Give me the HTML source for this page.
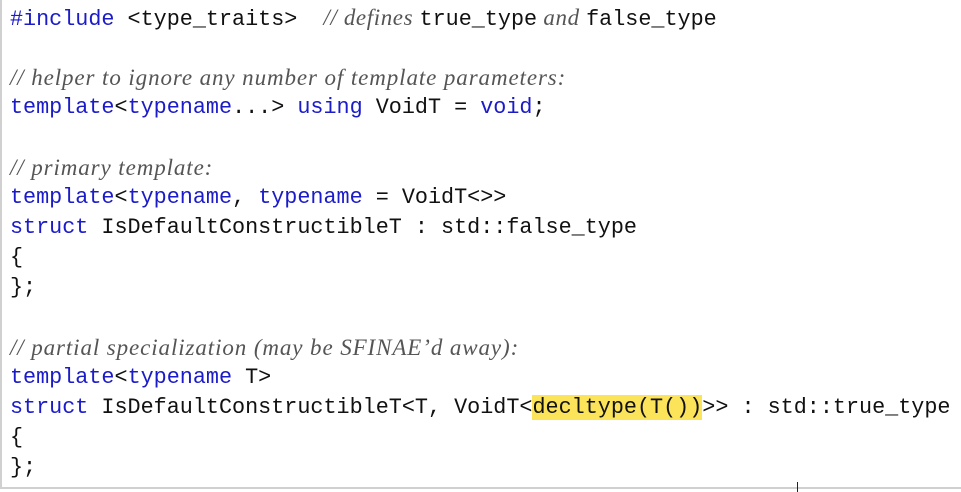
<!DOCTYPE html>
<html><head><meta charset="utf-8"><style>
body{margin:0;width:961px;height:492px;background:#fff;position:relative;overflow:hidden}
.box{position:absolute;left:0;top:-2px;width:961px;height:491px;border-left:2px solid #d0d0d0;border-bottom:2px solid #d0d0d0;box-sizing:border-box}
.l{position:absolute;left:10px;white-space:pre;font-family:"Liberation Mono",monospace;font-size:21.78px;color:#111;line-height:30px}
.k{color:#1b1bc8}
.c{font-family:"Liberation Serif",serif;font-style:italic;color:#555;font-size:23px;letter-spacing:0.9px}
.h{background:#fbe35a}
.tick{position:absolute;left:797px;top:482px;width:1px;height:10px;background:#222}
</style></head><body>
<div class="box"></div>
<div class="l" style="top:3px"><span class="k">#include</span> &lt;type_traits&gt;  <span class="c" style="letter-spacing:0.6px">// defines </span>true_type<span class="c" style="letter-spacing:0.6px"> and </span>false_type</div>
<div class="l" style="top:63px"><span class="c">// helper to ignore any number of template parameters:</span></div>
<div class="l" style="top:93px"><span class="k">template</span>&lt;<span class="k">typename</span>...&gt; <span class="k">using</span> VoidT = <span class="k">void</span>;</div>
<div class="l" style="top:153px"><span class="c">// primary template:</span></div>
<div class="l" style="top:183px"><span class="k">template</span>&lt;<span class="k">typename</span>, <span class="k">typename</span> = VoidT&lt;&gt;&gt;</div>
<div class="l" style="top:213px"><span class="k">struct</span> IsDefaultConstructibleT : std::false_type</div>
<div class="l" style="top:243px">{</div>
<div class="l" style="top:273px">};</div>
<div class="l" style="top:333px"><span class="c">// partial specialization (may be SFINAE’d away):</span></div>
<div class="l" style="top:363px"><span class="k">template</span>&lt;<span class="k">typename</span> T&gt;</div>
<div class="l" style="top:393px"><span class="k">struct</span> IsDefaultConstructibleT&lt;T, VoidT&lt;<span class="h">decltype(T())</span>&gt;&gt; : std::true_type</div>
<div class="l" style="top:423px">{</div>
<div class="l" style="top:453px">};</div>
<div class="tick"></div>
</body></html>
